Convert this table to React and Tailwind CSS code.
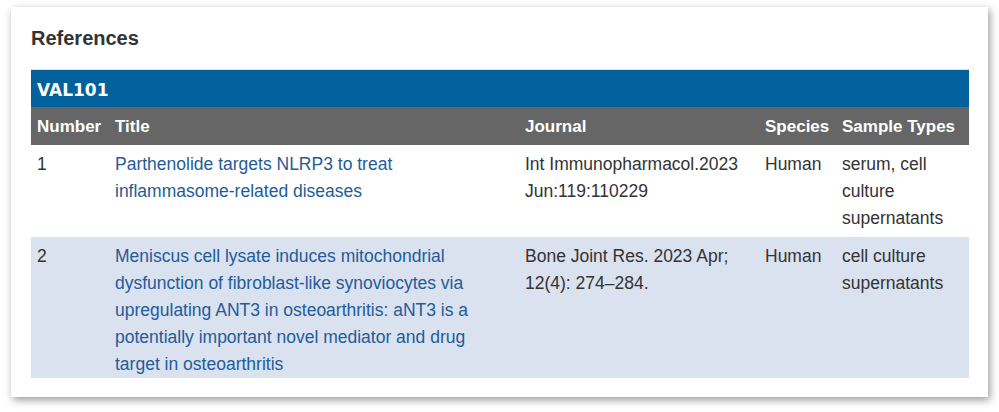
import React from 'react';

const refs = [
  {
    n: '1',
    title: 'Parthenolide targets NLRP3 to treat inflammasome-related diseases',
    journal: 'Int Immunopharmacol.2023 Jun:119:110229',
    species: 'Human',
    samples: 'serum, cell culture supernatants',
  },
  {
    n: '2',
    title:
      'Meniscus cell lysate induces mitochondrial dysfunction of fibroblast-like synoviocytes via upregulating ANT3 in osteoarthritis: aNT3 is a potentially important novel mediator and drug target in osteoarthritis',
    journal: 'Bone Joint Res. 2023 Apr; 12(4): 274–284.',
    species: 'Human',
    samples: 'cell culture supernatants',
  },
];

const App = () => {
  return (
    <div className="bg-white w-[999px] h-[412px] pl-[11px] pt-[7px] font-['Liberation_Sans',Arial,sans-serif]">
      <div className="w-[977px] h-[390px] bg-white shadow-[2px_3px_8px_rgba(0,0,0,0.4)] px-[20px] pt-[17px]">
        {/* heading */}
        <h2 className="text-[20px] leading-[28px] font-bold text-[#333]">References</h2>

        <div className="mt-[17px] w-[938px] border-t border-[#dcdcdc]">
          <div className="h-[37px] bg-[#02609c] text-white flex items-center pl-[6px] pt-[4px] font-['DejaVu_Sans',Verdana,sans-serif] font-bold text-[17px]">
            VAL101
          </div>
          <table className="w-[938px] table-fixed border-collapse">
            <colgroup>
              <col className="w-[78px]" />
              <col className="w-[410px]" />
              <col className="w-[240px]" />
              <col className="w-[77px]" />
              <col className="w-[133px]" />
            </colgroup>
            <thead>
              <tr className="h-[38px] bg-[#666] text-white text-[17px] font-bold">
                <th className="text-left px-[6px] pt-[2px] align-middle">Number</th>
                <th className="text-left px-[6px] pt-[2px] align-middle">Title</th>
                <th className="text-left px-[6px] pt-[2px] align-middle">Journal</th>
                <th className="text-left px-[6px] pt-[2px] align-middle whitespace-nowrap">Species</th>
                <th className="text-left px-[6px] pt-[2px] align-middle whitespace-nowrap">Sample Types</th>
              </tr>
            </thead>
            <tbody className="text-[17.5px] leading-[27px] text-[#333]">
              {refs.map((r, i) => (
                <tr key={r.n} className={i % 2 ? 'bg-[#dae1ef] h-[140px]' : 'bg-white h-[92px]'}>
                  <td className="align-top px-[6px] pt-[6px]">{r.n}</td>
                  <td className="align-top px-[6px] pt-[6px]">
                    <a href="#" className="text-[#1f5c99]">{r.title}</a>
                  </td>
                  <td className="align-top px-[6px] pt-[6px]">{r.journal}</td>
                  <td className="align-top px-[6px] pt-[6px]">{r.species}</td>
                  <td className="align-top px-[6px] pt-[6px]">{r.samples}</td>
                </tr>
              ))}
            </tbody>
          </table>
        </div>
      </div>
    </div>
  );
};

export default App;
